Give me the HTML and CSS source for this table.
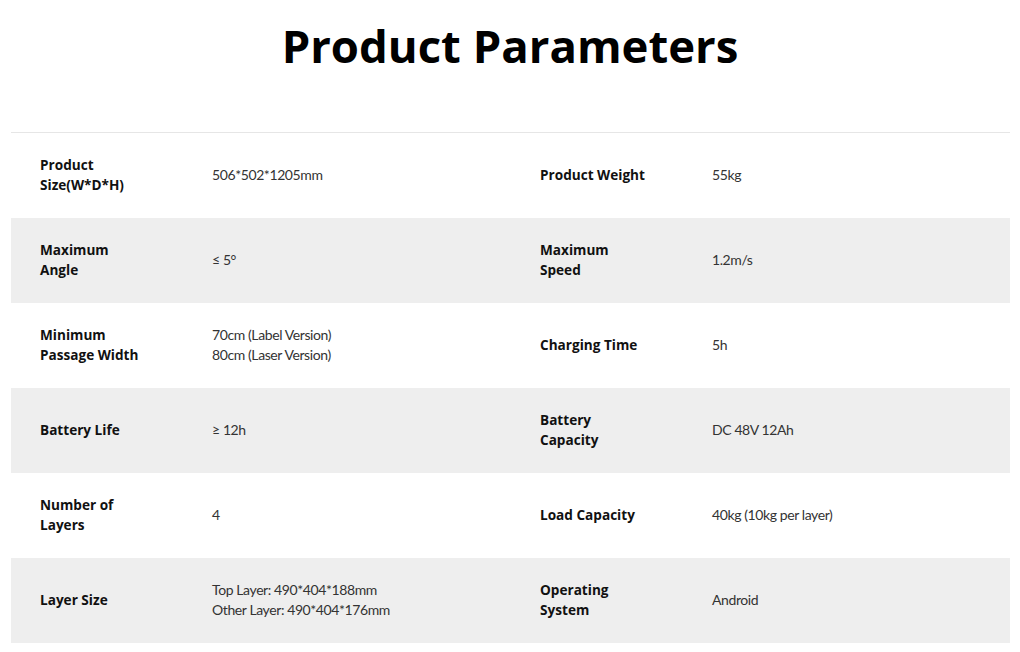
FILE: index.html
```html
<!DOCTYPE html>
<html>
<head>
<meta charset="utf-8">
<link rel="stylesheet" href="styles.css">
</head>
<body>
<h1 class="title">Product Parameters</h1>
<div class="table">
  <div class="row">
    <div class="label">Product<br>Size(W*D*H)</div>
    <div class="value">506*502*1205mm</div>
    <div class="label">Product Weight</div>
    <div class="value">55kg</div>
  </div>
  <div class="row alt">
    <div class="label">Maximum<br>Angle</div>
    <div class="value">≤ 5°</div>
    <div class="label">Maximum<br>Speed</div>
    <div class="value">1.2m/s</div>
  </div>
  <div class="row">
    <div class="label">Minimum<br>Passage Width</div>
    <div class="value">70cm (Label Version)<br>80cm (Laser Version)</div>
    <div class="label">Charging Time</div>
    <div class="value">5h</div>
  </div>
  <div class="row alt">
    <div class="label">Battery Life</div>
    <div class="value">≥ 12h</div>
    <div class="label">Battery<br>Capacity</div>
    <div class="value">DC 48V 12Ah</div>
  </div>
  <div class="row">
    <div class="label">Number of<br>Layers</div>
    <div class="value">4</div>
    <div class="label">Load Capacity</div>
    <div class="value">40kg (10kg per layer)</div>
  </div>
  <div class="row alt">
    <div class="label">Layer Size</div>
    <div class="value">Top Layer: 490*404*188mm<br>Other Layer: 490*404*176mm</div>
    <div class="label">Operating<br>System</div>
    <div class="value">Android</div>
  </div>
</div>
</body>
</html>
```
FILE: styles.css
```css
* { box-sizing: border-box; }
html, body { margin: 0; padding: 0; background: #fff; }
body { font-family: "Open Sans", "Noto Sans", sans-serif; color: #000; }
.title {
  margin: 0;
  padding-top: 14px;
  height: 132px;
  text-align: center;
  font-family: "Open Sans", sans-serif;
  font-weight: 700;
  font-size: 45.5px;
  line-height: 63px;
  color: #000;
}
.table {
  margin: 0 10px 0 11px;
  border-top: 1px solid #e6e6e6;
}
.row {
  display: grid;
  grid-template-columns: 172px 328px 172px 1fr;
  align-items: center;
  height: 85px;
  padding-left: 29px;
  padding-bottom: 2px;
}
.row.alt { background: #eeeeee; }
.label {
  font-family: "Open Sans", sans-serif;
  font-weight: 700;
  font-size: 13.6px;
  line-height: 20px;
  color: #111;
}
.value {
  font-family: "Lato", sans-serif;
  font-weight: 400;
  font-size: 14px;
  letter-spacing: -0.4px;
  line-height: 20px;
  color: #333;
}
```
